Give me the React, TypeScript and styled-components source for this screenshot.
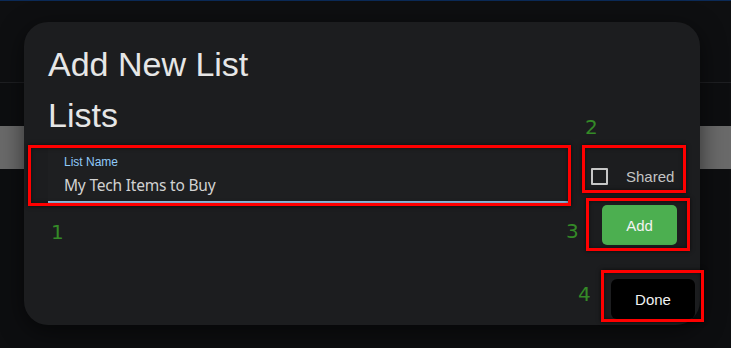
import { ReactElement, ReactNode } from 'react'
import styled, { createGlobalStyle } from 'styled-components'

const colors = {
  page: '#0d0e10',
  header: '#0e0f11',
  divider: '#1e1f22',
  stripe: '#6a6a6a',
  topLine: '#0b2a57',
  dialog: '#1c1d1f',
  heading: '#e6e6e6',
  label: '#90caf9',
  underline: '#9fd0f6',
  value: '#d2d2d2',
  muted: '#c4c4c4',
  green: '#4caf50',
  mark: '#ff0000',
  tag: '#348a27'
}

const GlobalStyle = createGlobalStyle`
  html, body {
    margin: 0;
    padding: 0;
    background: ${colors.page};
    font-family: "Liberation Sans", Arial, sans-serif;
  }
  * { box-sizing: border-box; }
`

const Page = styled.div`
  position: relative;
  width: 731px;
  height: 348px;
  overflow: hidden;
  background: ${colors.page};
`

const Backdrop = styled.div`
  display: flex;
  flex-direction: column;
`

const TopLine = styled.div`
  height: 1px;
  background: ${colors.topLine};
`

const HeaderBand = styled.div`
  height: 82px;
  background: ${colors.header};
  border-bottom: 1px solid ${colors.divider};
`

const Stripe = styled.div`
  margin-top: 43px;
  height: 43px;
  background: ${colors.stripe};
`

const Dialog = styled.div`
  position: absolute;
  left: 24px;
  top: 22px;
  width: 676px;
  height: 303px;
  padding: 22px 5px 6px 24px;
  border-radius: 24px;
  background: ${colors.dialog};
  box-shadow: 0 6px 24px rgba(0, 0, 0, 0.55);
  display: flex;
  flex-direction: column;
`

const Title = styled.h1`
  margin: 0;
  font-size: 34px;
  line-height: 40px;
  font-weight: 400;
  color: ${colors.heading};

  & + & {
    margin-top: 11px;
  }
`

const Body = styled.div`
  display: flex;
  align-items: flex-start;
  gap: 20px;
  margin-top: 12px;
`

const Side = styled.div`
  width: 107px;
  display: flex;
  flex-direction: column;
  align-items: flex-start;
`

const Footer = styled.div`
  display: flex;
  justify-content: flex-end;
  margin-top: 34px;
`

/* annotation overlay: red frame + step number */
const Marked = styled.div<{ $mt?: number; $ml?: number }>`
  position: relative;
  display: flex;
  margin-top: ${({ $mt }) => $mt ?? 0}px;
  margin-left: ${({ $ml }) => $ml ?? 0}px;
`

const Frame = styled.span<{ $t: number; $r: number; $b: number; $l: number }>`
  position: absolute;
  top: ${({ $t }) => $t}px;
  right: ${({ $r }) => $r}px;
  bottom: ${({ $b }) => $b}px;
  left: ${({ $l }) => $l}px;
  border: 3px solid ${colors.mark};
  box-shadow: 0 0 4px rgba(0, 0, 0, 0.7), inset 0 0 4px rgba(0, 0, 0, 0.5);
  pointer-events: none;
`

const Tag = styled.span<{ $t: number; $l: number }>`
  position: absolute;
  top: ${({ $t }) => $t}px;
  left: ${({ $l }) => $l}px;
  font-family: "DejaVu Sans", sans-serif;
  font-size: 20px;
  line-height: 20px;
  color: ${colors.tag};
`

interface MarkProps {
  step: number
  frame: [number, number, number, number]
  tag: [number, number]
  mt?: number
  ml?: number
  children: ReactNode
}

const Mark = ({ step, frame, tag, mt, ml, children }: MarkProps): ReactElement => (
  <Marked $mt={mt} $ml={ml}>
    {children}
    <Frame $t={frame[0]} $r={frame[1]} $b={frame[2]} $l={frame[3]} />
    <Tag $t={tag[0]} $l={tag[1]}>
      {step}
    </Tag>
  </Marked>
)

const Field = styled.div`
  width: 520px;
  height: 56px;
  padding: 7px 16px 0;
  display: flex;
  flex-direction: column;
  background: rgba(255, 255, 255, 0.012);
  border-bottom: 2px solid ${colors.underline};
`

const FieldLabel = styled.label`
  font-size: 12px;
  line-height: 16px;
  color: ${colors.label};
`

const FieldValue = styled.div`
  margin-top: 3px;
  font-family: "Noto Sans", "Open Sans", sans-serif;
  font-size: 15.5px;
  letter-spacing: -0.2px;
  line-height: 24px;
  color: ${colors.value};
`

const CheckRow = styled.label`
  display: flex;
  align-items: center;
  height: 32px;
  gap: 18px;
  font-size: 15px;
  color: ${colors.muted};
`

const Box = styled.span`
  width: 17px;
  height: 17px;
  border: 2px solid #c6c6c6;
  border-radius: 1px;
`

const Button = styled.button<{ $variant: 'add' | 'done' }>`
  border: 0;
  padding: 0;
  height: 40px;
  width: ${({ $variant }) => ($variant === 'add' ? 75 : 84)}px;
  border-radius: ${({ $variant }) => ($variant === 'add' ? 5 : 6)}px;
  background: ${({ $variant }) => ($variant === 'add' ? colors.green : '#000')};
  color: #f2f2f2;
  font-family: "Liberation Sans", Arial, sans-serif;
  font-size: 15px;
`

export default function App(): ReactElement {
  return (
    <Page>
      <GlobalStyle />
      <Backdrop>
        <TopLine />
        <HeaderBand />
        <Stripe />
      </Backdrop>
      <Dialog>
        <Title>Add New List</Title>
        <Title>Lists</Title>
        <Body>
          <Mark step={1} frame={[-2, -3, -3, -20]} tag={[75, 3]}>
            <Field>
              <FieldLabel>List Name</FieldLabel>
              <FieldValue>My Tech Items to Buy</FieldValue>
            </Field>
          </Mark>
          <Side>
            <Mark step={2} frame={[-15, -12, -1, -9]} tag={[-43, -6]} mt={13} ml={3}>
              <CheckRow>
                <Box />
                Shared
              </CheckRow>
            </Mark>
            <Mark step={3} frame={[-7, -13, -6, -16]} tag={[16, -36]} mt={13} ml={14}>
              <Button $variant="add">Add</Button>
            </Mark>
          </Side>
        </Body>
        <Footer>
          <Mark step={4} frame={[-9, -9, -3, -10]} tag={[5, -33]}>
            <Button $variant="done">Done</Button>
          </Mark>
        </Footer>
      </Dialog>
    </Page>
  )
}
